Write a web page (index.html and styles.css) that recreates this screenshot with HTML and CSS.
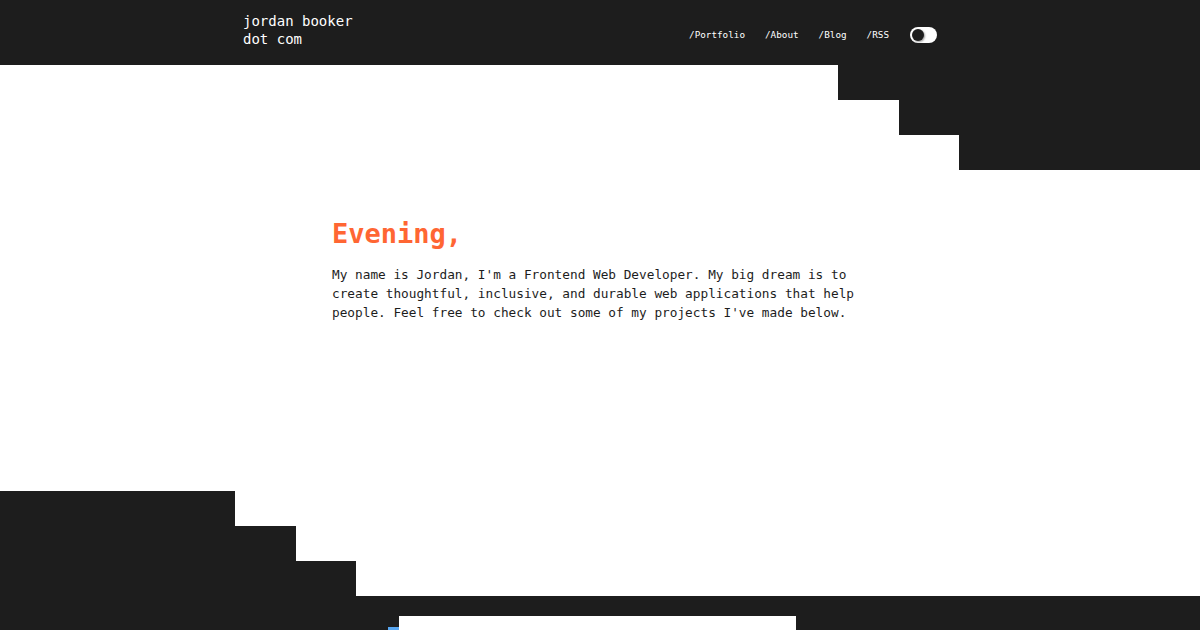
FILE: index.html
```html
<!DOCTYPE html>
<html lang="en">
<head>
<meta charset="utf-8">
<title>jordan booker dot com</title>
<link rel="stylesheet" href="styles.css">
</head>
<body>
<header class="site-header">
  <a class="brand" href="#">jordan booker<br>dot com</a>
  <nav class="nav">
    <a href="#">/Portfolio</a>
    <a href="#">/About</a>
    <a href="#">/Blog</a>
    <a href="#">/RSS</a>
    <span class="toggle"><span class="knob"></span></span>
  </nav>
</header>
<main>
  <div class="steps steps-right">
    <div class="step s1"></div>
    <div class="step s2"></div>
    <div class="step s3"></div>
  </div>
  <section class="hero">
    <h1 class="greeting">Evening,</h1>
    <p class="intro">My name is Jordan, I'm a Frontend Web Developer. My big dream is to create thoughtful, inclusive, and durable web applications that help people. Feel free to check out some of my projects I've made below.</p>
  </section>
  <div class="steps steps-left">
    <div class="step b1"></div>
    <div class="step b2"></div>
    <div class="step b3"></div>
  </div>
  <section class="projects">
    <div class="card-wrap">
      <span class="accent"></span>
      <div class="card"></div>
    </div>
  </section>
</main>
</body>
</html>
```

FILE: styles.css
```css
* { box-sizing: border-box; }
html, body { margin: 0; padding: 0; }
body {
  background: #ffffff;
  color: #1d1d1d;
  font-family: "DejaVu Sans Mono", "Liberation Mono", monospace;
  overflow: hidden;
}
.site-header {
  height: 65px;
  background: #1d1d1d;
  display: flex;
  align-items: center;
  justify-content: space-between;
  padding: 0 263px 0 243px;
}
.brand {
  color: #ffffff;
  text-decoration: none;
  font-size: 14px;
  line-height: 18px;
  padding-bottom: 6px;
}
.nav {
  display: flex;
  align-items: center;
  gap: 20px;
  margin-top: 4px;
}
.nav a {
  color: #ffffff;
  text-decoration: none;
  font-size: 9.3px;
  line-height: 12px;
}
.toggle {
  width: 27px;
  height: 16px;
  border-radius: 8px;
  background: #ffffff;
  display: flex;
  align-items: center;
  padding-left: 2px;
  margin-left: 1px;
}
.knob {
  width: 12px;
  height: 12px;
  border-radius: 50%;
  background: #1d1d1d;
  box-shadow: 1px 1px 2px rgba(0,0,0,0.4);
}
.steps { display: flex; flex-direction: column; }
.steps-right { align-items: flex-end; }
.steps-left { align-items: flex-start; }
.step { height: 35px; background: #1d1d1d; }
.s1 { width: 362px; }
.s2 { width: 301px; }
.s3 { width: 241px; }
.b1 { width: 235px; }
.b2 { width: 296px; }
.b3 { width: 356px; }
.hero {
  height: 321px;
  padding: 47px 0 0 332px;
}
.greeting {
  margin: 0;
  color: #ff6633;
  font-size: 27px;
  line-height: 34px;
  font-weight: bold;
}
.intro {
  margin: 14px 0 0;
  width: 540px;
  font-size: 12.75px;
  line-height: 19px;
}
.projects {
  background: #1d1d1d;
  height: 34px;
  overflow: hidden;
  padding: 20px 0 0 388px;
}
.card-wrap {
  display: flex;
  align-items: flex-start;
}
.accent {
  width: 11px;
  height: 40px;
  margin-top: 11px;
  background: #58a6f0;
}
.card {
  width: 397px;
  height: 60px;
  background: #ffffff;
}
```
